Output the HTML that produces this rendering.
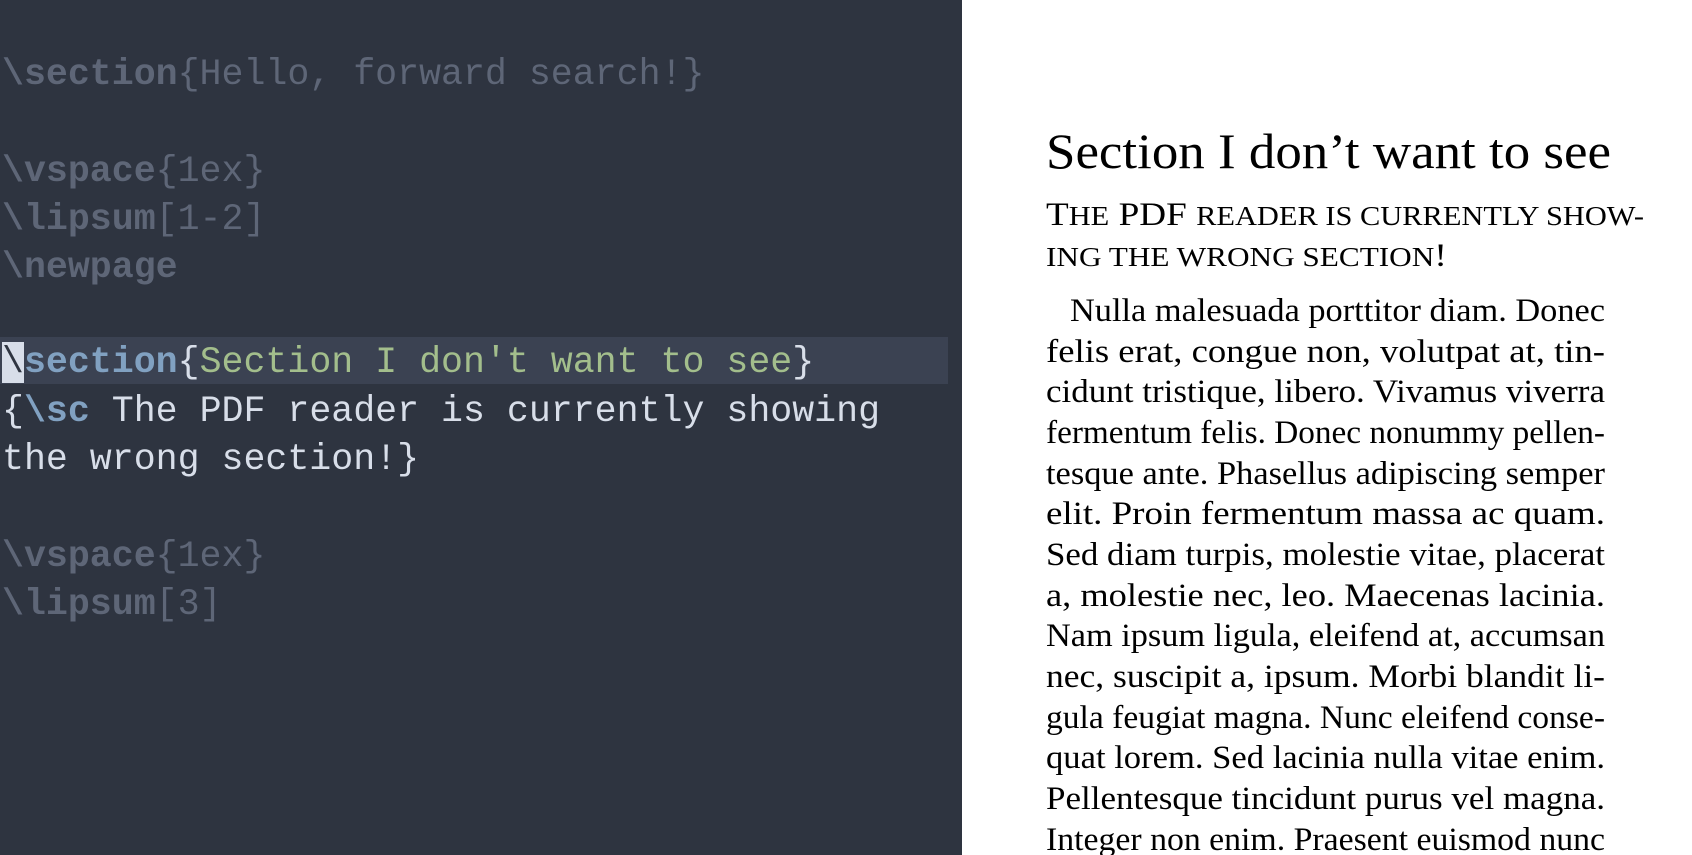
<!DOCTYPE html>
<html><head><meta charset="utf-8"><style>
html,body{margin:0;padding:0;width:1692px;height:855px;overflow:hidden;background:#fff}
#ed{position:absolute;left:0;top:0;width:962px;height:855px;background:#2e3440}
.hl{position:absolute;left:0;top:337px;width:948px;height:47px;background:#3b4252}
.ln{position:absolute;left:2px;font-family:"Liberation Mono",monospace;font-size:36.6px;line-height:48px;white-space:pre;color:#d8dee9}
.d{color:#5e6677}.b{font-weight:bold}
.k{color:#81a1c1;font-weight:bold}.s{color:#a3be8c}
.cur{background:#d8dee9;color:#2e3440}
svg{position:absolute;left:0;top:0}
</style></head><body>
<div id="ed">
<div class="hl"></div>
<div class="ln d" style="top:51px"><span class="b">\section</span>{Hello, forward search!}</div>
<div class="ln d" style="top:148px"><span class="b">\vspace</span>{1ex}</div>
<div class="ln d" style="top:196px"><span class="b">\lipsum</span>[1-2]</div>
<div class="ln d" style="top:244px"><span class="b">\newpage</span></div>
<div class="ln" style="top:339px"><span class="cur">\</span><span class="k">section</span>{<span class="s">Section I don't want to see</span>}</div>
<div class="ln" style="top:388px">{<span class="k">\sc</span> The PDF reader is currently showing</div>
<div class="ln" style="top:436px">the wrong section!}</div>
<div class="ln d" style="top:533px"><span class="b">\vspace</span>{1ex}</div>
<div class="ln d" style="top:581px"><span class="b">\lipsum</span>[3]</div>
</div>
<svg width="1692" height="855" style="left:0">
<g font-family="Liberation Serif, serif" fill="#000">
<text x="1046" y="168" font-size="50" textLength="565" lengthAdjust="spacingAndGlyphs">Section I don’t want to see</text>
<text x="1046" y="225" font-size="33" textLength="598" lengthAdjust="spacingAndGlyphs">T<tspan font-size="27">HE</tspan> PDF <tspan font-size="27">READER IS CURRENTLY SHOW-</tspan></text>
<text x="1046" y="266" font-size="27" textLength="401" lengthAdjust="spacingAndGlyphs">ING THE WRONG SECTION<tspan font-size="33">!</tspan></text>
<g font-size="33">
<text x="1070" y="321" textLength="535" lengthAdjust="spacingAndGlyphs">Nulla malesuada porttitor diam. Donec</text>
<text x="1046" y="362" textLength="559" lengthAdjust="spacingAndGlyphs">felis erat, congue non, volutpat at, tin-</text>
<text x="1046" y="402" textLength="559" lengthAdjust="spacingAndGlyphs">cidunt tristique, libero. Vivamus viverra</text>
<text x="1046" y="443" textLength="559" lengthAdjust="spacingAndGlyphs">fermentum felis. Donec nonummy pellen-</text>
<text x="1046" y="484" textLength="559" lengthAdjust="spacingAndGlyphs">tesque ante. Phasellus adipiscing semper</text>
<text x="1046" y="524" textLength="559" lengthAdjust="spacingAndGlyphs">elit.  Proin fermentum massa ac quam.</text>
<text x="1046" y="565" textLength="559" lengthAdjust="spacingAndGlyphs">Sed diam turpis, molestie vitae, placerat</text>
<text x="1046" y="606" textLength="559" lengthAdjust="spacingAndGlyphs">a, molestie nec, leo.  Maecenas lacinia.</text>
<text x="1046" y="646" textLength="559" lengthAdjust="spacingAndGlyphs">Nam ipsum ligula, eleifend at, accumsan</text>
<text x="1046" y="687" textLength="559" lengthAdjust="spacingAndGlyphs">nec, suscipit a, ipsum.  Morbi blandit li-</text>
<text x="1046" y="728" textLength="559" lengthAdjust="spacingAndGlyphs">gula feugiat magna. Nunc eleifend conse-</text>
<text x="1046" y="768" textLength="559" lengthAdjust="spacingAndGlyphs">quat lorem. Sed lacinia nulla vitae enim.</text>
<text x="1046" y="809" textLength="559" lengthAdjust="spacingAndGlyphs">Pellentesque tincidunt purus vel magna.</text>
<text x="1046" y="850" textLength="559" lengthAdjust="spacingAndGlyphs">Integer non enim. Praesent euismod nunc</text>
</g></g>
</svg>
</body></html>
